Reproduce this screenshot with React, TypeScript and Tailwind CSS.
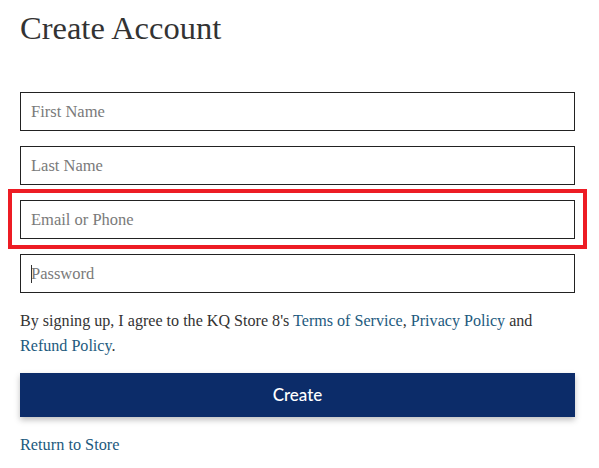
import { useState } from "react";

const fields = [
  { name: "firstName", label: "First Name", type: "text" },
  { name: "lastName", label: "Last Name", type: "text" },
  { name: "email", label: "Email or Phone", type: "text" },
  { name: "password", label: "Password", type: "password" },
];

export default function App() {
  const [values, setValues] = useState<Record<string, string>>({});

  return (
    <div className="relative min-h-[468px] w-[599px] bg-white pl-5 pr-6 pt-[8px] text-[#333]" style={{ fontFamily: '"Liberation Serif", Georgia, serif' }}>
      <h1 className="text-[32.5px] leading-[40px] text-[#333]">Create Account</h1>

      <form className="mt-[44px] flex flex-col gap-[15px]" onSubmit={(e) => e.preventDefault()}>
        {fields.map((f) => (
          <div key={f.name} className="relative">
            <input
              type={f.type}
              placeholder={f.label}
              value={values[f.name] ?? ""}
              onChange={(e) => setValues({ ...values, [f.name]: e.target.value })}
              className="h-[39px] w-full border border-[#222] bg-white px-[10px] text-[16.5px] text-[#333] outline-none placeholder:text-[#7a7a7a]"
              style={{ fontFamily: '"Liberation Serif", Georgia, serif' }}
            />
            {f.name === "password" && (
              <span className="absolute left-[11px] top-[11px] h-[18px] w-px bg-[#333]"></span>
            )}
          </div>
        ))}
      </form>

      <p className="mt-[15px] text-[16.1px] leading-[25px] text-[#333]">
        By signing up, I agree to the KQ Store 8's{" "}
        <a href="#" className="text-[#1d5a7e]">Terms of Service</a>,{" "}
        <a href="#" className="text-[#1d5a7e]">Privacy Policy</a> and{" "}
        <a href="#" className="text-[#1d5a7e]">Refund Policy</a>.
      </p>

      <button
        type="button"
        className="mt-[15px] h-[44px] w-full bg-[#0c2c69] text-[17px] font-medium text-white shadow-[0_3px_6px_rgba(0,0,0,0.25)]"
        style={{ fontFamily: "Lato, sans-serif" }}
      >
        Create
      </button>

      <a href="#" className="mt-[16px] block text-[16.3px] text-[#1d5a7e]">Return to Store</a>

      {/* highlight annotation */}
      <div className="pointer-events-none absolute left-[8px] top-[189px] h-[60px] w-[579px] border-[4px] border-[#ed1c24]"></div>
    </div>
  );
}
